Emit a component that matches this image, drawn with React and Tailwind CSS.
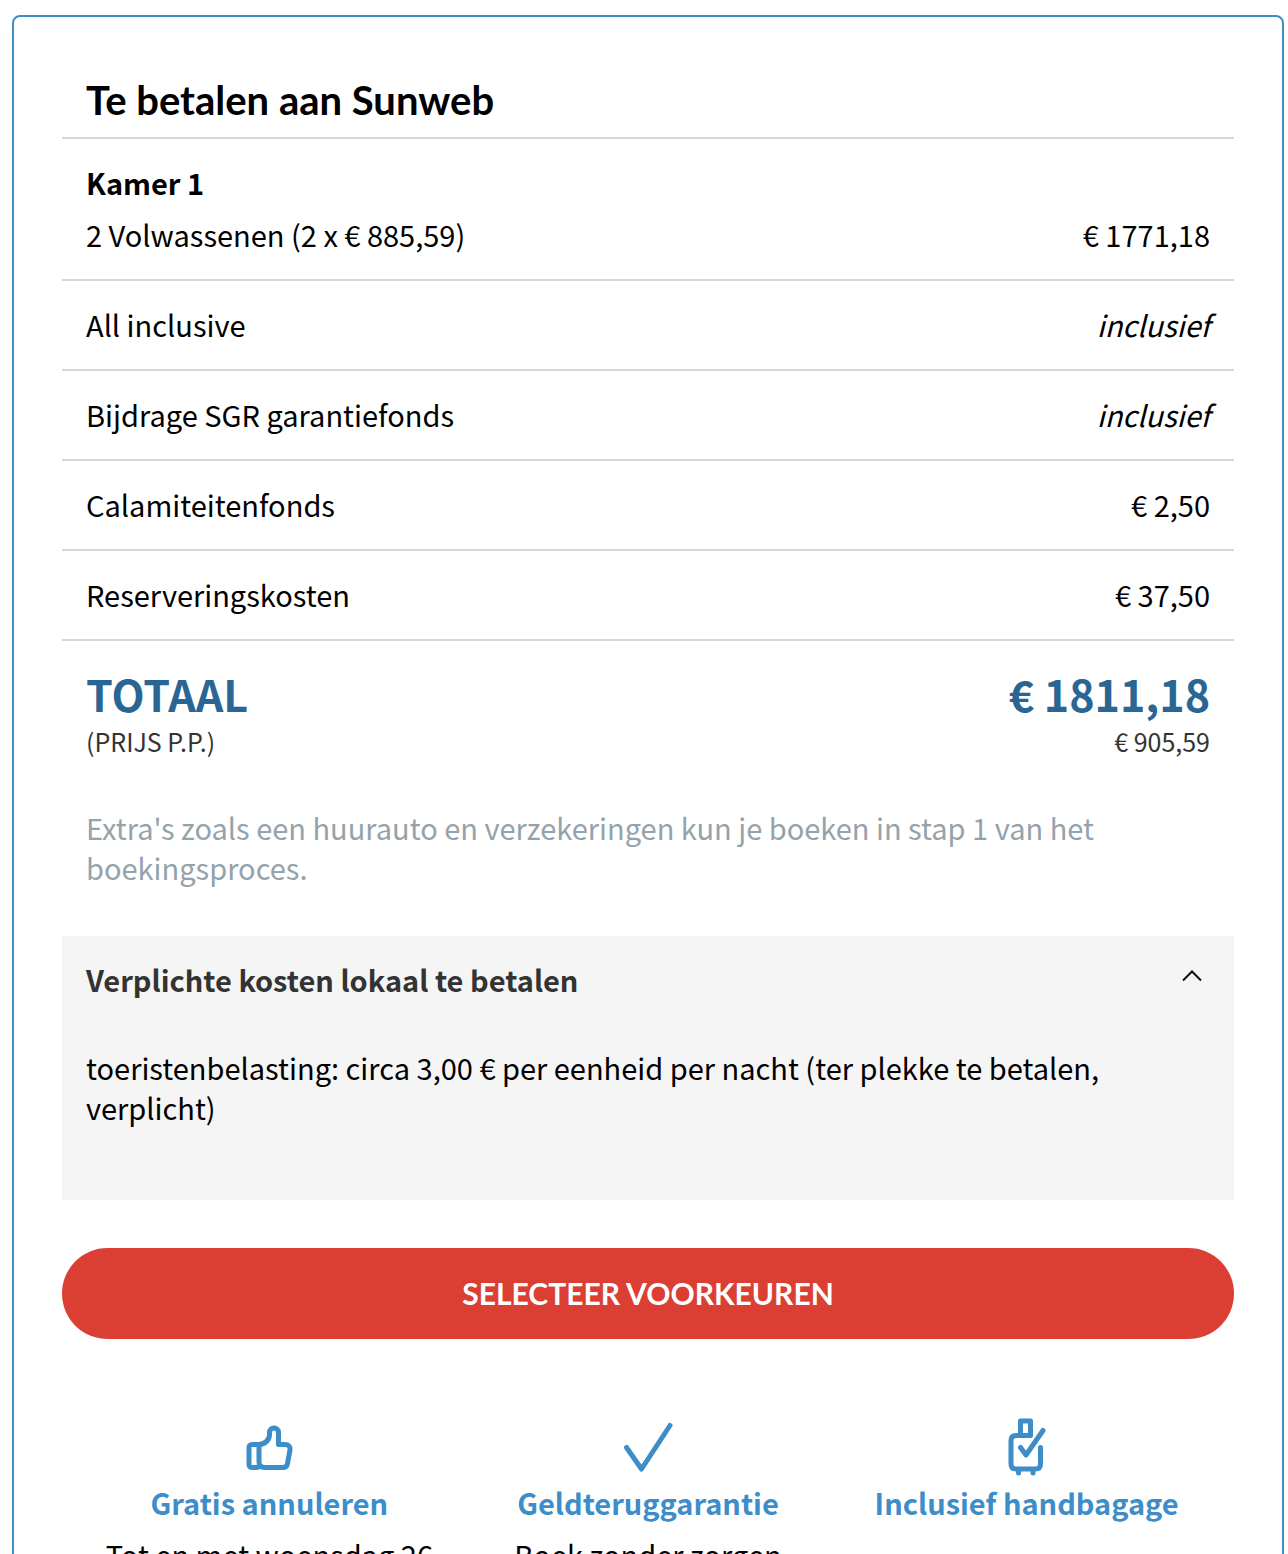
import { useState } from "react";

const rows = [
  { label: "All inclusive", value: "inclusief", included: true },
  { label: "Bijdrage SGR garantiefonds", value: "inclusief", included: true },
  { label: "Calamiteitenfonds", value: "€ 2,50" },
  { label: "Reserveringskosten", value: "€ 37,50" },
];

function ThumbIcon() {
  return (
    <svg width="60" height="60" viewBox="0 0 60 60" fill="none" stroke="currentColor" strokeWidth="5" strokeLinecap="round" strokeLinejoin="round" aria-hidden="true">
      <path d="M19.5 28.5H13a3 3 0 0 0-3 3v17a3 3 0 0 0 3 3h4.500c1.500 0 2.500-.8 3-1.500" />
      <path d="M19.500 28.500c6 0 11-4 11-10V16.500c0-6 9-6 9 0V28.500h6.500c3.500 0 5.500 2 5 5.500l-2.500 13.500c-.5 2.700-2 4-4.500 4H26c-4 0-6-2-6-5.500V28.500" />
    </svg>
  );
}

function CheckIcon() {
  return (
    <svg width="60" height="60" viewBox="0 0 60 60" fill="none" stroke="currentColor" strokeWidth="5" strokeLinecap="round" strokeLinejoin="round" aria-hidden="true">
      <path d="M8.500 31.500L23.500 53L52 9.500" />
    </svg>
  );
}

function LuggageIcon() {
  return (
    <svg width="60" height="60" viewBox="0 0 60 60" fill="none" stroke="currentColor" strokeWidth="5" strokeLinecap="round" strokeLinejoin="round" aria-hidden="true">
      <path d="M33 19.500H19c-3.500 0-5 1.500-5 5v23.500c0 3.500 1.500 5 5 5h19.500c3.500 0 5-1.500 5-5V31.500" />
      <path d="M23.500 19.500V5h10v14.500" />
      <path d="M23.500 31.500l5.500 7.500L46 14.500M21.500 54v3M36 54v3" />
    </svg>
  );
}

const features = [
  { title: "Gratis annuleren", text: "Tot en met woensdag 26", Icon: ThumbIcon },
  { title: "Geldteruggarantie", text: "Boek zonder zorgen", Icon: CheckIcon },
  { title: "Inclusief handbagage", text: "", Icon: LuggageIcon },
];

export default function App() {
  const [open, setOpen] = useState(true);
  return (
    <main className="h-screen overflow-hidden bg-white pt-[15px] pr-1 pl-3 font-['Noto_Sans_CJK_SC',sans-serif] text-[29px] leading-10 text-black">
      <section className="rounded-lg border-2 border-[#3d8dc9] px-12 pt-12 pb-12">
        <h2 className="border-b-2 border-[#d3d8dc] px-6 pt-[15px] pb-[17px] font-[Lato,sans-serif] text-[40px] leading-10 font-bold">
          Te betalen aan Sunweb
        </h2>
        <table className="w-full border-separate border-spacing-0">
          <tbody>
            <tr>
              <th scope="row" className="border-b-2 border-[#d3d8dc] pt-[23px] pb-[25px] pl-6 text-left font-normal">
                <span className="mb-3 block font-bold">Kamer 1</span>
                <span className="block">2 Volwassenen (2 x € 885,59)</span>
              </th>
              <td className="border-b-2 border-[#d3d8dc] pt-[23px] pr-6 pb-[25px] text-right align-bottom">€ 1771,18</td>
            </tr>
            {rows.map((row) => (
              <tr key={row.label}>
                <th scope="row" className="border-b-2 border-[#d3d8dc] pt-[23px] pb-[25px] pl-6 text-left font-normal">{row.label}</th>
                <td className="border-b-2 border-[#d3d8dc] pt-[23px] pr-6 pb-[25px] text-right">
                  {row.included ? <em>{row.value}</em> : row.value}
                </td>
              </tr>
            ))}
            <tr className="text-[43px] leading-12 text-[#2a6694]">
              <th scope="row" className="pt-7 pl-6 text-left font-bold">TOTAAL</th>
              <td className="pt-7 pr-6 text-right font-bold">€ 1811,18</td>
            </tr>
            <tr className="text-[25px] text-[#333333]">
              <th scope="row" className="pt-1 pl-6 text-left font-normal">(PRIJS P.P.)</th>
              <td className="pt-1 pr-6 text-right">€ 905,59</td>
            </tr>
          </tbody>
        </table>
        <p className="mt-[46px] px-6 text-[#94a3ab]">
          Extra's zoals een huurauto en verzekeringen kun je boeken in stap 1 van het boekingsproces.
        </p>
        <div className="mt-[49px] bg-[#f5f5f5] px-6 pt-[23px]">
          <button
            type="button"
            aria-expanded={open}
            onClick={() => setOpen(!open)}
            className="flex w-full items-center justify-between pr-2 pb-6 text-left font-bold text-[#333333]"
          >
            Verplichte kosten lokaal te betalen
            <svg width="20" height="20" viewBox="0 0 20 20" fill="none" stroke="#111111" strokeWidth="2" className={open ? "" : "rotate-180"} aria-hidden="true">
              <path d="M1 11.500L10 2.500L19 11.500" />
            </svg>
          </button>
          {open && (
            <p className="pt-6 pb-[73px]">
              toeristenbelasting: circa 3,00 € per eenheid per nacht (ter plekke te betalen, verplicht)
            </p>
          )}
        </div>
        <button
          type="button"
          className="mt-12 w-full rounded-full bg-[#db3e32] py-[25px] font-[Lato,sans-serif] text-[30px] leading-[41px] font-bold text-white"
        >
          SELECTEER VOORKEUREN
        </button>
        <ul className="mt-[77px] grid grid-cols-3 px-[18px] text-center">
          {features.map(({ title, text, Icon }) => (
            <li key={title} className="flex flex-col items-center gap-1.5">
              <span className="text-[#3d8dc9]"><Icon /></span>
              <h3 className="font-bold whitespace-nowrap text-[#3d8dc9]">{title}</h3>
              <p className="mt-1.5">{text}</p>
            </li>
          ))}
        </ul>
      </section>
    </main>
  );
}
